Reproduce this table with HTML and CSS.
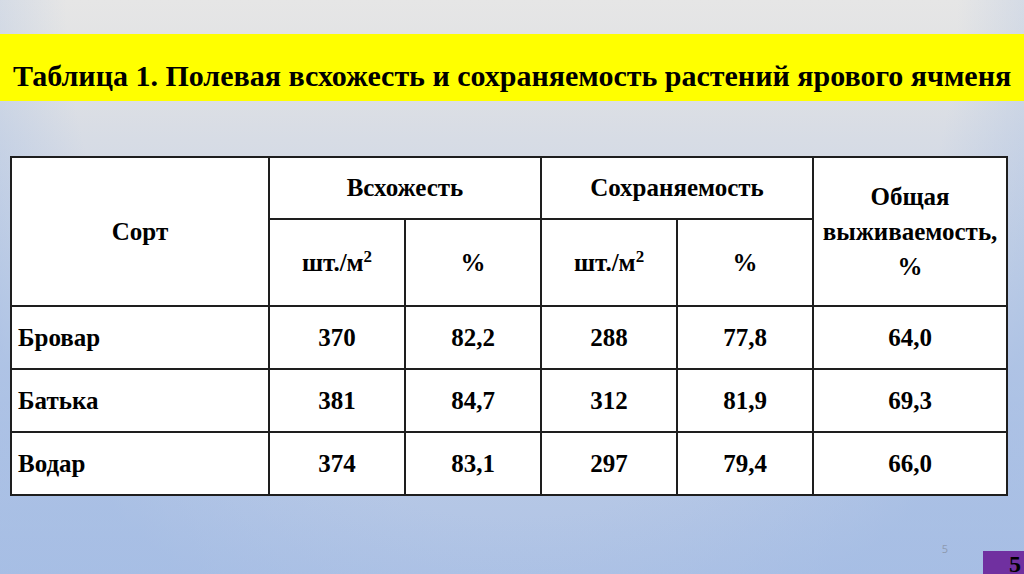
FILE: index.html
```html
<!DOCTYPE html>
<html lang="ru">
<head>
<meta charset="utf-8">
<title>Таблица 1</title>
<link rel="stylesheet" href="styles.css">
</head>
<body>
<div class="slide">
  <div class="title-band">
    <h1 class="title">Таблица 1. Полевая всхожесть и сохраняемость растений ярового ячменя</h1>
  </div>
  <table class="data">
    <colgroup>
      <col class="c-sort">
      <col class="c-num">
      <col class="c-num">
      <col class="c-num">
      <col class="c-num">
      <col class="c-total">
    </colgroup>
    <tr class="h1">
      <th rowspan="2" class="sort-h">Сорт</th>
      <th colspan="2" class="grp">Всхожесть</th>
      <th colspan="2" class="grp">Сохраняемость</th>
      <th rowspan="2" class="total-h">Общая<br>выживаемость,<br>%</th>
    </tr>
    <tr class="h2">
      <th>шт./м<sup>2</sup></th>
      <th>%</th>
      <th>шт./м<sup>2</sup></th>
      <th>%</th>
    </tr>
    <tr class="row">
      <td class="name">Бровар</td><td>370</td><td>82,2</td><td>288</td><td>77,8</td><td>64,0</td>
    </tr>
    <tr class="row">
      <td class="name">Батька</td><td>381</td><td>84,7</td><td>312</td><td>81,9</td><td>69,3</td>
    </tr>
    <tr class="row">
      <td class="name">Водар</td><td>374</td><td>83,1</td><td>297</td><td>79,4</td><td>66,0</td>
    </tr>
  </table>
  <div class="footer">
    <span class="pageno">5</span>
    <span class="pagebox">5</span>
  </div>
</div>
</body>
</html>
```

FILE: styles.css
```css
html, body {
  margin: 0;
  padding: 0;
}
body {
  width: 1024px;
  height: 574px;
  overflow: hidden;
}
.slide {
  width: 1024px;
  height: 574px;
  display: flex;
  flex-direction: column;
  box-sizing: border-box;
  padding-top: 34px;
  background:
    radial-gradient(ellipse 58% 120% at 50% 0%, rgba(160,186,228,0) 75%, rgba(160,186,228,0.55) 100%),
    linear-gradient(to bottom, #e6e6e6 0, #e1e2e4 60px, #d7dce5 140px, #c9d4e6 280px, #bacae6 430px, #afc3e5 574px);
  font-family: "Liberation Serif", "Times New Roman", serif;
  color: #000;
}
.title-band {
  height: 67px;
  box-sizing: border-box;
  background: #ffff00;
  padding: 25px 0 0 13px;
}
.title {
  margin: 0;
  font-size: 30px;
  line-height: 34px;
  font-weight: bold;
  white-space: nowrap;
}
.data {
  margin: 55px 0 0 10px;
  width: 998px;
  table-layout: fixed;
  border-collapse: collapse;
  background: #fff;
  font-size: 25px;
  font-weight: bold;
}
.c-sort { width: 258px; }
.c-num { width: 136px; }
.c-total { width: 194px; }
.data th, .data td {
  border: 2px solid #1e1e1e;
  padding: 0 4px;
  text-align: center;
  vertical-align: middle;
  font-weight: bold;
}
.data sup {
  font-size: 17px;
  vertical-align: 9px;
  line-height: 0;
}
.h1 { height: 62px; }
.h2 { height: 87px; }
.row { height: 63px; }
.grp { padding-bottom: 4px; }
.total-h { line-height: 35px; padding-top: 2px; }
.data td.name { text-align: left; padding-left: 6px; }
.footer {
  margin-top: auto;
  display: flex;
  justify-content: flex-end;
  align-items: flex-end;
}
.pageno {
  font-family: "Open Sans", "Liberation Sans", sans-serif;
  font-size: 11px;
  color: #8e9ab0;
  margin-right: 35px;
  margin-bottom: 18px;
}
.pagebox {
  width: 41px;
  height: 23px;
  box-sizing: border-box;
  padding: 3px 3px 0 0;
  background: #7030a0;
  font-size: 24px;
  line-height: 20px;
  font-weight: bold;
  text-align: right;
  color: #000;
}
```
